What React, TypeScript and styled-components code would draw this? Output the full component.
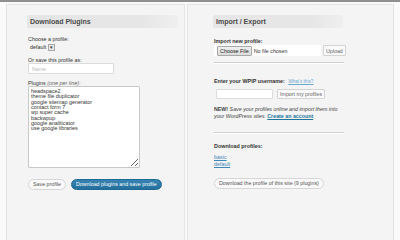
import styled, { createGlobalStyle } from "styled-components"

const GlobalStyle = createGlobalStyle`
  html, body {
    margin: 0;
    padding: 0;
    background: #fafafa;
    font-family: "Liberation Sans", Arial, sans-serif;
    color: #333;
  }
  * { box-sizing: border-box; }
`

const plugins = [
  "headspace2",
  "theme file duplicator",
  "google sitemap generator",
  "contact form 7",
  "wp super cache",
  "backwpup",
  "google analiticator",
  "use google libraries",
]

function App() {
  return (
    <>
      <GlobalStyle />
      <Page>
        <TopBar />
        <Columns>
          <Panel $width={179} $padLeft={21}>
            <SectionTitle $width={151}>Download Plugins</SectionTitle>
            <Label $top={8}>Choose a profile:</Label>
            <FakeSelect>
              default
              <SelectArrow>▾</SelectArrow>
            </FakeSelect>
            <Label $top={6}>Or save this profile as:</Label>
            <TextInput $width={86} $height={11} placeholder="Name" />
            <Label $top={6}>
              Plugins <em>(one per line):</em>
            </Label>
            <PluginList readOnly defaultValue={plugins.join("\n")} />
            <ButtonRow $top={11}>
              <PillButton>Save profile</PillButton>
              <PillButton $primary>Download plugins and save profile</PillButton>
            </ButtonRow>
          </Panel>

          <Panel $width={207} $padLeft={26}>
            <SectionTitle $width={130}>Import / Export</SectionTitle>
            <Label $top={10} $bold>
              Import new profile:
            </Label>
            <FileRow>
              <FileBox>
                <ChooseButton>Choose File</ChooseButton>
                <span>No file chosen</span>
              </FileBox>
              <SquareButton>Upload</SquareButton>
            </FileRow>
            <Divider $top={6} />
            <Label $top={14} $bold>
              Enter your WPIP username: <SmallLink>What's this?</SmallLink>
            </Label>
            <InputRow>
              <TextInput $width={57} $height={10} />
              <SquareButton>Import my profiles</SquareButton>
            </InputRow>
            <Note>
              <NoteLine>
                <strong>NEW!</strong> <em>Save your profiles online and import them into</em>
              </NoteLine>
              <NoteLine>
                <em>your WordPress sites.</em> <StrongLink>Create an account</StrongLink>
              </NoteLine>
            </Note>
            <Divider $top={13} />
            <Label $top={9} $bold>
              Download profiles:
            </Label>
            <ProfileLinks>
              <ProfileLink>basic</ProfileLink>
              <ProfileLink>default</ProfileLink>
            </ProfileLinks>
            <ButtonRow $top={10}>
              <PillButton>Download the profile of this site (9 plugins)</PillButton>
            </ButtonRow>
          </Panel>
        </Columns>
      </Page>
    </>
  )
}

const Page = styled.div`
  width: 400px;
  height: 240px;
  overflow: hidden;
  background: #fafafa;
`

const TopBar = styled.div`
  height: 2px;
  background: #8f8f8f;
`

const Columns = styled.div`
  display: flex;
  gap: 2px;
  padding: 2px 0 0 6px;
`

const Panel = styled.div<{ $width: number; $padLeft: number }>`
  width: ${(p) => p.$width}px;
  height: 240px;
  flex: none;
  display: flex;
  flex-direction: column;
  align-items: flex-start;
  padding: 10px 0 0 ${(p) => p.$padLeft}px;
  background: #f4f4f4;
  border: 1px solid #e4e4e4;
`

const SectionTitle = styled.h2<{ $width: number }>`
  margin: 0 0 0 -1px;
  width: ${(p) => p.$width}px;
  height: 13px;
  padding-left: 3px;
  font-size: 7px;
  line-height: 13px;
  font-weight: bold;
  color: #4a4a4a;
  border-radius: 2px;
  background: linear-gradient(to right, #e6e6e6 75%, #efefef);
`

const Label = styled.div<{ $top: number; $bold?: boolean }>`
  margin-top: ${(p) => p.$top}px;
  font-size: 5.4px;
  line-height: 6px;
  font-weight: ${(p) => (p.$bold ? "bold" : "normal")};
  color: #333;
  white-space: nowrap;

  em {
    color: #666;
  }
`

const FakeSelect = styled.div`
  margin: 1px 0 0 2px;
  height: 8px;
  display: flex;
  align-items: center;
  gap: 2px;
  font-size: 5.4px;
  color: #333;
`

const SelectArrow = styled.span`
  width: 7px;
  height: 7px;
  display: flex;
  align-items: center;
  justify-content: center;
  font-size: 5px;
  line-height: 1;
  background: #e6e6e6;
  border: 1px solid #aaa;
`

const TextInput = styled.input<{ $width: number; $height: number }>`
  width: ${(p) => p.$width}px;
  height: ${(p) => p.$height}px;
  padding: 0 0 0 3px;
  margin: 0;
  font-family: inherit;
  font-size: 5.2px;
  background: #fff;
  border: 1px solid #dcdcdc;
  border-radius: 1px;
  outline: none;

  &::placeholder {
    color: #bbb;
  }
`

const PluginList = styled.textarea`
  width: 112px;
  height: 82px;
  margin: 0;
  padding: 2px 2px 0 2px;
  font-family: inherit;
  font-size: 5.4px;
  line-height: 5.35px;
  color: #333;
  background: #fff;
  border: 1px solid #c8c8c8;
  border-radius: 1px;
  resize: both;
  outline: none;
`

const ButtonRow = styled.div<{ $top: number }>`
  margin-top: ${(p) => p.$top}px;
  display: flex;
  gap: 5px;
`

const PillButton = styled.button<{ $primary?: boolean }>`
  height: 11px;
  padding: 0 4px;
  font-family: inherit;
  font-size: 5.3px;
  line-height: 9px;
  white-space: nowrap;
  border-radius: 6px;
  color: ${(p) => (p.$primary ? "#fff" : "#555")};
  background: ${(p) =>
    p.$primary ? "linear-gradient(#3584b3, #236f9c)" : "#f9f9f9"};
  border: 1px solid ${(p) => (p.$primary ? "#1f6a94" : "#d6d6d6")};
`

const FileRow = styled.div`
  margin-top: 1px;
  display: flex;
  gap: 2px;
`

const FileBox = styled.div`
  width: 107px;
  height: 11px;
  display: flex;
  align-items: center;
  gap: 2px;
  padding-left: 3px;
  font-size: 5.3px;
  color: #333;
  background: #fff;
`

const ChooseButton = styled.span`
  height: 10px;
  padding: 0 2px;
  display: flex;
  align-items: center;
  font-size: 5.4px;
  color: #222;
  background: linear-gradient(#f0f0f0, #dcdcdc);
  border: 1px solid #a8a8a8;
  border-radius: 1px;
`

const SquareButton = styled.button`
  height: 11px;
  padding: 0 2px;
  font-family: inherit;
  font-size: 5.3px;
  color: #666;
  white-space: nowrap;
  background: #fafafa;
  border: 1px solid #d4d4d4;
  border-radius: 1px;
`

const Divider = styled.div<{ $top: number }>`
  margin-top: ${(p) => p.$top}px;
  width: 130px;
  height: 2px;
  border-top: 1px solid #cfcfcf;
  border-bottom: 1px solid #fff;
`

const SmallLink = styled.a`
  margin-left: 2px;
  font-size: 4.6px;
  font-weight: normal;
  color: #6aa8cc;
  text-decoration: underline;
`

const InputRow = styled.div`
  margin: 4px 0 0 2px;
  display: flex;
  gap: 4px;

  ${SquareButton} {
    height: 10px;
  }
`

const Note = styled.div`
  margin-top: 7px;
  display: flex;
  flex-direction: column;
  font-size: 5.3px;
  color: #444;
`

const NoteLine = styled.div`
  height: 6.5px;
  line-height: 6.5px;
  white-space: nowrap;
`

const StrongLink = styled.a`
  font-weight: bold;
  color: #21759b;
  text-decoration: underline;
`

const ProfileLinks = styled.div`
  margin-top: 5px;
  display: flex;
  flex-direction: column;
`

const ProfileLink = styled.a`
  font-size: 5.4px;
  line-height: 7px;
  color: #3d86b8;
  text-decoration: underline;
`

export default App
